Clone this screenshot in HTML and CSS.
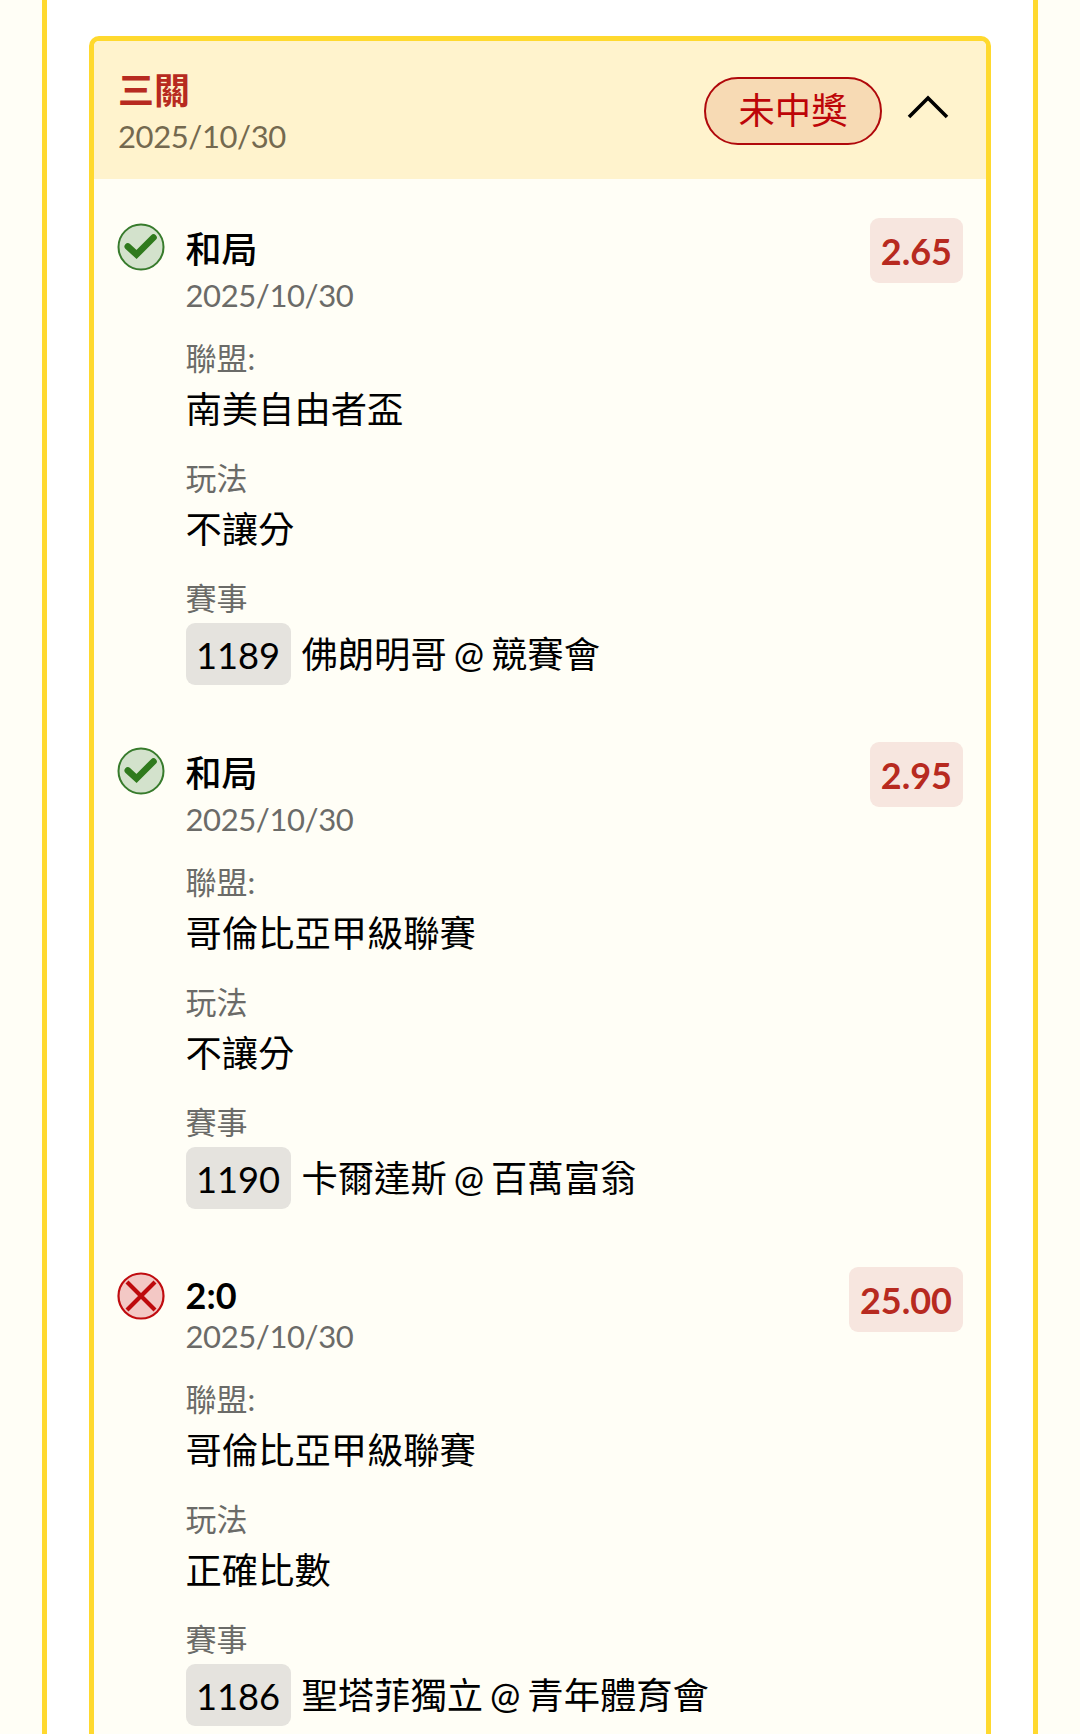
FILE: index.html
```html
<!DOCTYPE html>
<html lang="zh-Hant">
<head>
    <meta charset="utf-8" />
    <meta name="viewport" content="width=device-width, initial-scale=1" />
    <title>三關</title>
    <link rel="stylesheet" href="styles.css">
</head>
<body>
    <div class="panel">
        <div class="card">
            <div class="card-header">
                <div class="heading">
                    <h2>三關</h2>
                    <p class="date">2025/10/30</p>
                </div>
                <span class="result">未中獎</span>
                <svg class="chevron" viewBox="0 0 42 26" fill="none" stroke="#000" stroke-width="3.600">
                    <path d="M2 23 21 4 40 23" />
                </svg>
            </div>

            <div class="bet">
                <svg class="icon" viewBox="0 0 48 48">
                    <circle cx="24" cy="24" r="22.500" fill="#d3e2cc" stroke="#377b2c" stroke-width="2" />
                    <path d="M10.800 23.500 19.500 31.500 36.500 14.500" fill="none" stroke="#2f7a1d" stroke-width="6.600" stroke-linecap="round" />
                </svg>
                <div class="detail">
                    <h3>和局</h3>
                    <p class="date">2025/10/30</p>
                    <div class="field">
                        <p class="label">聯盟:</p>
                        <p class="value">南美自由者盃</p>
                    </div>
                    <div class="field">
                        <p class="label">玩法</p>
                        <p class="value">不讓分</p>
                    </div>
                    <div class="field">
                        <p class="label">賽事</p>
                        <p class="match"><span class="code">1189</span><span class="teams">佛朗明哥 @ 競賽會</span></p>
                    </div>
                </div>
                <span class="odds">2.65</span>
            </div>

            <div class="bet">
                <svg class="icon" viewBox="0 0 48 48">
                    <circle cx="24" cy="24" r="22.500" fill="#d3e2cc" stroke="#377b2c" stroke-width="2" />
                    <path d="M10.800 23.500 19.500 31.500 36.500 14.500" fill="none" stroke="#2f7a1d" stroke-width="6.600" stroke-linecap="round" />
                </svg>
                <div class="detail">
                    <h3>和局</h3>
                    <p class="date">2025/10/30</p>
                    <div class="field">
                        <p class="label">聯盟:</p>
                        <p class="value">哥倫比亞甲級聯賽</p>
                    </div>
                    <div class="field">
                        <p class="label">玩法</p>
                        <p class="value">不讓分</p>
                    </div>
                    <div class="field">
                        <p class="label">賽事</p>
                        <p class="match"><span class="code">1190</span><span class="teams">卡爾達斯 @ 百萬富翁</span></p>
                    </div>
                </div>
                <span class="odds">2.95</span>
            </div>

            <div class="bet">
                <svg class="icon" viewBox="0 0 48 48">
                    <circle cx="24" cy="24" r="22.500" fill="#f3c8c5" stroke="#c00c10" stroke-width="2.200" />
                    <path d="M10 10 38 38M38 10 10 38" fill="none" stroke="#bd0a0d" stroke-width="4.200" />
                </svg>
                <div class="detail">
                    <h3 class="score">2:0</h3>
                    <p class="date">2025/10/30</p>
                    <div class="field">
                        <p class="label">聯盟:</p>
                        <p class="value">哥倫比亞甲級聯賽</p>
                    </div>
                    <div class="field">
                        <p class="label">玩法</p>
                        <p class="value">正確比數</p>
                    </div>
                    <div class="field">
                        <p class="label">賽事</p>
                        <p class="match"><span class="code">1186</span><span class="teams">聖塔菲獨立 @ 青年體育會</span></p>
                    </div>
                </div>
                <span class="odds">25.00</span>
            </div>
        </div>
    </div>
</body>
</html>
```
FILE: styles.css
```css
* {
    box-sizing: border-box;
}
body {
    margin: 0;
    background: #fffef6;
    color: #000;
    font-family: Lato, "Noto Sans CJK TC", sans-serif;
    font-size: 36.3px;
}
h2, h3, p {
    margin: 0;
}
.panel {
    margin: 0 42px;
    height: 1734px;
    overflow: hidden;
    padding: 36px 42px 0;
    background: #fff;
    border: solid #ffd92e;
    border-width: 0 5px;
}
.card {
    background: #fffef6;
    border: 5px solid #ffd92e;
    border-radius: 10px;
}
.card-header {
    display: flex;
    height: 138px;
    padding: 0 36px 0 24px;
    margin-bottom: 39px;
    background: #fff3cd;
    border-radius: 5px 5px 0 0;
}
.heading {
    flex: 1;
    padding-top: 23px;
}
h2 {
    color: #b72a20;
    font-size: 36px;
    font-weight: bold;
    line-height: 52px;
}
.heading .date {
    color: #74694f;
}
.date {
    color: #6b6b68;
    font-size: 31px;
    letter-spacing: -0.4px;
    line-height: 40px;
}
.result {
    width: 178px;
    height: 68px;
    margin-top: 36px;
    border: 2px solid #b0080b;
    border-radius: 34px;
    background: #f7dab4;
    color: #bd0508;
    line-height: 62px;
    text-align: center;
}
.chevron {
    width: 42px;
    height: 26px;
    margin: 53px 1px 0 25px;
}
.bet {
    display: flex;
    align-items: flex-start;
    height: 524.3px;
    padding: 0 23px;
}
.icon {
    width: 48px;
    height: 48px;
    margin: 5px 20.5px 0 0;
}
.detail {
    flex: 1;
    padding-top: 5px;
}
h3 {
    font-size: 36px;
    font-weight: 500;
    line-height: 52px;
}
h3.score {
    font-weight: bold;
    line-height: 46px;
    margin-bottom: -2px;
}
.field {
    margin-top: 18px;
}
.date + .field {
    margin-top: 20px;
}
.label {
    color: #6b6b68;
    font-size: 31px;
    line-height: 46px;
}
.value {
    line-height: 56px;
}
.match {
    display: flex;
    align-items: center;
    gap: 11px;
    height: 62px;
    margin-top: 2px;
}
.code {
    width: 105px;
    height: 62px;
    border-radius: 9px;
    background: #e5e3de;
    line-height: 65px;
    text-align: center;
}
.teams {
    height: 62px;
    line-height: 62px;
    word-spacing: -2.3px;
}
.odds {
    height: 65px;
    padding: 0 11px;
    border-radius: 9px;
    background: #f7e6df;
    color: #b72a20;
    font-size: 36px;
    font-weight: bold;
    line-height: 67px;
}
```
